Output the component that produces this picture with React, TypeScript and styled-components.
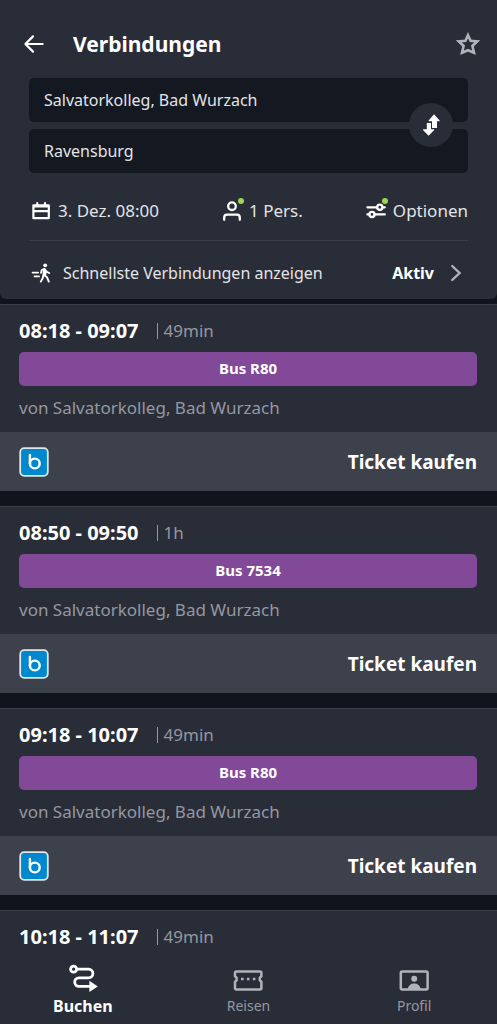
import React from 'react';
import styled, { createGlobalStyle } from 'styled-components';

const color = {
  page: '#10141c',
  surface: '#292d37',
  field: '#141921',
  bar: '#3d414b',
  line: '#3b3f49',
  text: '#e3e4e7',
  strong: '#ffffff',
  muted: '#9498a2',
  icon: '#afb4bb',
  bus: '#814997',
  dot: '#9ed552',
};

const GlobalStyle = createGlobalStyle`
  *, *::before, *::after { box-sizing: border-box; }
  body {
    margin: 0;
    background: ${color.page};
    color: ${color.text};
    font-family: "Noto Sans", "Open Sans", sans-serif;
    font-size: 16px;
    line-height: 24px;
  }
  button, input { font: inherit; color: inherit; }
  button { background: none; border: 0; padding: 0; cursor: pointer; }
  h1, h2, p { margin: 0; }
  svg { display: block; flex: none; }
`;

const Shell = styled.div`
  display: flex;
  flex-direction: column;
  height: 100vh;
`;

const Header = styled.header`
  flex: none;
  padding: 28px 29px 0;
  background: ${color.surface};
  border-radius: 0 0 6px 6px;
`;

const TitleRow = styled.div`
  display: flex;
  align-items: center;
  height: 32px;
  margin: 0 -12px 18px -7px;
`;

const Title = styled.h1`
  flex: 1;
  margin-left: 27px;
  color: ${color.strong};
  font-size: 21px;
  line-height: 32px;
  font-weight: 700;
`;

const IconButton = styled.button`
  display: block;
  color: ${color.strong};
`;

const StarButton = styled(IconButton)`
  color: ${color.icon};
`;

const Route = styled.div`
  position: relative;
  display: grid;
  gap: 7px;
`;

const RouteField = styled.input`
  width: 100%;
  height: 44px;
  padding: 0 64px 0 15px;
  border: 0;
  border-radius: 5px;
  outline: 0;
  background: ${color.field};
  color: ${color.text};
`;

const SwapButton = styled.button`
  position: absolute;
  right: 15px;
  top: 25px;
  display: grid;
  place-items: center;
  width: 44px;
  height: 44px;
  border-radius: 50%;
  background: ${color.surface};
  color: ${color.strong};
`;

const Filters = styled.div`
  display: flex;
  justify-content: space-between;
  align-items: center;
  height: 68px;
  padding: 9px 0 0 2px;
  border-bottom: 1px solid ${color.line};
`;

const Filter = styled.button`
  display: flex;
  align-items: center;
  gap: 7px;
  height: 32px;
  font-size: 17px;
`;

const IconWithDot = styled.span`
  position: relative;
  color: ${color.strong};

  &::after {
    content: '';
    position: absolute;
    top: -2px;
    right: -2px;
    width: 6px;
    height: 6px;
    border-radius: 50%;
    background: ${color.dot};
  }
`;

const PlainIcon = styled.span`
  color: ${color.strong};
`;

const FastestRow = styled.button`
  display: flex;
  align-items: center;
  width: 100%;
  height: 58px;
  padding: 6px 5px 0 2px;
  text-align: left;
`;

const FastestLabel = styled.span`
  flex: 1;
  margin-left: 12px;
`;

const FastestState = styled.span`
  margin-right: 15px;
  color: ${color.strong};
  font-weight: 700;
`;

const Chevron = styled.span`
  color: ${color.icon};
`;

const List = styled.main`
  flex: 1;
  min-height: 0;
  overflow-y: auto;
  scrollbar-width: none;
  padding-top: 5px;
  display: flex;
  flex-direction: column;
  gap: 15px;
`;

const Card = styled.article`
  flex: none;
  background: ${color.surface};
  border-top: 1px solid ${color.line};
`;

const CardBody = styled.div`
  padding: 13px 20px 12px 19px;
`;

const Times = styled.div`
  display: flex;
  align-items: center;
  gap: 18px;
  height: 26px;
`;

const TimeRange = styled.h2`
  color: ${color.strong};
  font-size: 20px;
  line-height: 26px;
  font-weight: 700;
`;

const Duration = styled.span`
  display: flex;
  align-items: center;
  gap: 6px;
  color: ${color.muted};
  font-size: 17px;

  &::before {
    content: '';
    width: 1px;
    height: 16px;
    background: ${color.muted};
  }
`;

const Line = styled.div`
  height: 34px;
  margin-top: 8px;
  border-radius: 5px;
  background: ${color.bus};
  color: ${color.strong};
  font-size: 15px;
  line-height: 32px;
  font-weight: 700;
  text-align: center;
`;

const Origin = styled.p`
  margin-top: 10px;
  color: ${color.muted};
  font-size: 17px;
`;

const CardBar = styled.div`
  display: flex;
  align-items: center;
  justify-content: space-between;
  height: 59px;
  padding: 0 20px 0 19px;
  background: ${color.bar};
`;

const BuyButton = styled.button`
  color: ${color.strong};
  font-size: 19px;
  line-height: 28px;
  font-weight: 700;
`;

const TabBar = styled.nav`
  flex: none;
  display: grid;
  grid-template-columns: repeat(3, 1fr);
  height: 72px;
  background: ${color.surface};
`;

const Tab = styled.button<{ $active?: boolean }>`
  display: flex;
  flex-direction: column;
  align-items: center;
  padding-top: 10px;
  color: ${(p) => (p.$active ? color.strong : color.icon)};
`;

const TabLabel = styled.span<{ $active?: boolean }>`
  font-size: ${(p) => (p.$active ? 16 : 14)}px;
  line-height: 24px;
  font-weight: ${(p) => (p.$active ? 700 : 400)};
  color: ${(p) => (p.$active ? color.strong : color.muted)};
`;

const BackIcon = () => (
  <svg width="24" height="24" viewBox="0 0 24 24" fill="none" stroke="currentColor" strokeWidth="2.2" strokeLinecap="round" strokeLinejoin="round" aria-hidden="true">
    <path d="M20.6 12H3.4M11 4.4L3.4 12L11 19.6" />
  </svg>
);

const StarIcon = () => (
  <svg width="24" height="24" viewBox="0 0 24 24" fill="none" stroke="currentColor" strokeWidth="2.6" strokeLinejoin="miter" aria-hidden="true">
    <path d="M12 3.2L14.6 8.8L21.2 9.4L16.4 14L18 20.8L12 18.2L6 20.8L7.6 14L2.8 9.4L9.4 8.8Z" />
  </svg>
);

const SwapIcon = () => (
  <svg width="24" height="24" viewBox="0 0 24 24" fill="currentColor" aria-hidden="true">
    <path d="M15 1.2L20.6 7.4V8.2H18V15H13V8.2H9.6V7.4Z" />
    <path d="M7.8 10H12V16.2H15.2V17L9.6 22.8L4 17V16.2H7.8Z" />
  </svg>
);

const CalendarIcon = () => (
  <svg width="20" height="20" viewBox="0 0 20 20" fill="none" stroke="currentColor" strokeWidth="2.2" strokeLinejoin="round" strokeLinecap="round" aria-hidden="true">
    <path d="M2.4 4.4H17.8V17.2H2.4ZM2.4 10.2H17.8M6.2 2.2V4M14 2.2V4M3 5.4H17" />
  </svg>
);

const PersonIcon = () => (
  <svg width="20" height="22" viewBox="0 0 20 22" fill="none" stroke="currentColor" strokeWidth="2.3" strokeLinecap="round" aria-hidden="true">
    <circle cx="10" cy="6.2" r="3.8" />
    <path d="M2.2 19.8V17.4Q2.2 14.6 5 14.6H15Q17.8 14.6 17.8 17.4V19.8" />
  </svg>
);

const SlidersIcon = () => (
  <svg width="20" height="22" viewBox="0 0 20 22" fill="none" stroke="currentColor" strokeWidth="2.3" strokeLinecap="round" aria-hidden="true">
    <path d="M1.4 7.3H11M16.6 7.3H18.8M1.4 14.4H3.2M8.6 14.4H18.8" />
    <circle cx="13.8" cy="7.3" r="2.6" />
    <circle cx="6" cy="14.4" r="2.6" />
  </svg>
);

const WalkIcon = () => (
  <svg width="20" height="20" viewBox="0 0 20 20" fill="none" stroke="currentColor" strokeWidth="1.9" strokeLinecap="round" strokeLinejoin="round" aria-hidden="true">
    <circle cx="14.2" cy="2.3" r="1.9" fill="currentColor" stroke="none" />
    <path d="M1.6 9.6H7M3.6 13.4H8" />
    <path d="M10 9.8L10.8 7L13.4 5.8L15.8 8.8L18.2 10M13.2 6L12.4 11.6L16 14.2L17.8 18.6M12.4 11.8L11.8 15L9.8 18.6M14.8 7.4L14.2 12.4" />
  </svg>
);

const ChevronIcon = () => (
  <svg width="14" height="20" viewBox="0 0 14 20" fill="none" stroke="currentColor" strokeWidth="2.4" strokeLinecap="round" aria-hidden="true">
    <path d="M3.2 3L10.6 10L3.2 17" />
  </svg>
);

const BodoLogo = () => (
  <svg width="30" height="30" viewBox="0 0 30 30" fill="none" role="img" aria-label="bodo">
    <rect x="1.2" y="1.2" width="27.6" height="27.6" rx="4" fill="#0088cf" stroke="#dfe5e9" strokeWidth="1.8" />
    <path d="M10.9 8V16.4" stroke="#ffffff" strokeWidth="2.4" strokeLinecap="round" />
    <circle cx="15.8" cy="16.5" r="4.9" stroke="#ffffff" strokeWidth="2.4" />
  </svg>
);

const RouteIcon = () => (
  <svg width="32" height="32" viewBox="0 0 32 32" fill="none" stroke="currentColor" strokeWidth="2.8" aria-hidden="true">
    <circle cx="6.6" cy="7.2" r="3" />
    <path d="M9.6 7.2H21.6A4.3 4.3 0 0 1 21.6 15.8H12A4.3 4.3 0 0 0 12 24.4H23" />
    <path d="M22.4 18.8L30.8 24.4L22.4 30Z" fill="currentColor" stroke="none" />
  </svg>
);

const TicketIcon = () => (
  <svg width="32" height="32" viewBox="0 0 32 32" fill="none" stroke="currentColor" strokeWidth="2.5" strokeLinejoin="round" aria-hidden="true">
    <path d="M4.4 9.4H28Q29.4 9.4 29.4 10.8V14.2L27.8 15.6V18.4L29.4 19.8V26Q29.4 27.4 28 27.4H4.4Q3 27.4 3 26V19.8L4.6 18.4V15.6L3 14.2V10.8Q3 9.4 4.4 9.4Z" />
    <path d="M9 17H11.6M14.9 17H17.5M20.8 17H23.4" strokeWidth="2.6" />
  </svg>
);

const ProfileIcon = () => (
  <svg width="32" height="32" viewBox="0 0 32 32" fill="none" aria-hidden="true">
    <rect x="2.8" y="9.4" width="26.8" height="18" rx="1.4" stroke="currentColor" strokeWidth="2.5" />
    <circle cx="16.2" cy="16.8" r="3" fill="currentColor" />
    <path d="M9.4 27.4Q11 21.6 16.2 21.6Q21.4 21.6 23 27.4Z" fill="currentColor" />
  </svg>
);

type Connection = { times: string; duration: string; line?: string; origin?: string };

const origin = 'von Salvatorkolleg, Bad Wurzach';

const connections: Connection[] = [
  { times: '08:18 - 09:07', duration: '49min', line: 'Bus R80', origin },
  { times: '08:50 - 09:50', duration: '1h', line: 'Bus 7534', origin },
  { times: '09:18 - 10:07', duration: '49min', line: 'Bus R80', origin },
  { times: '10:18 - 11:07', duration: '49min' },
];

const ConnectionCard = ({ times, duration, line, origin: from }: Connection) => (
  <Card>
    <CardBody>
      <Times>
        <TimeRange>{times}</TimeRange>
        <Duration>{duration}</Duration>
      </Times>
      {line && <Line>{line}</Line>}
      {from && <Origin>{from}</Origin>}
    </CardBody>
    {line && (
      <CardBar>
        <BodoLogo />
        <BuyButton type="button">Ticket kaufen</BuyButton>
      </CardBar>
    )}
  </Card>
);

export default function App() {
  return (
    <>
      <GlobalStyle />
      <Shell>
        <Header>
          <TitleRow>
            <IconButton type="button" aria-label="Zurück"><BackIcon /></IconButton>
            <Title>Verbindungen</Title>
            <StarButton type="button" aria-label="Merken"><StarIcon /></StarButton>
          </TitleRow>
          <Route>
            <RouteField aria-label="Start" defaultValue="Salvatorkolleg, Bad Wurzach" />
            <RouteField aria-label="Ziel" defaultValue="Ravensburg" />
            <SwapButton type="button" aria-label="Start und Ziel tauschen"><SwapIcon /></SwapButton>
          </Route>
          <Filters>
            <Filter type="button"><PlainIcon><CalendarIcon /></PlainIcon>3. Dez. 08:00</Filter>
            <Filter type="button"><IconWithDot><PersonIcon /></IconWithDot>1 Pers.</Filter>
            <Filter type="button"><IconWithDot><SlidersIcon /></IconWithDot>Optionen</Filter>
          </Filters>
          <FastestRow type="button">
            <PlainIcon><WalkIcon /></PlainIcon>
            <FastestLabel>Schnellste Verbindungen anzeigen</FastestLabel>
            <FastestState>Aktiv</FastestState>
            <Chevron><ChevronIcon /></Chevron>
          </FastestRow>
        </Header>
        <List>
          {connections.map((c) => <ConnectionCard key={c.times} {...c} />)}
        </List>
        <TabBar>
          <Tab type="button" $active><RouteIcon /><TabLabel $active>Buchen</TabLabel></Tab>
          <Tab type="button"><TicketIcon /><TabLabel>Reisen</TabLabel></Tab>
          <Tab type="button"><ProfileIcon /><TabLabel>Profil</TabLabel></Tab>
        </TabBar>
      </Shell>
    </>
  );
}
